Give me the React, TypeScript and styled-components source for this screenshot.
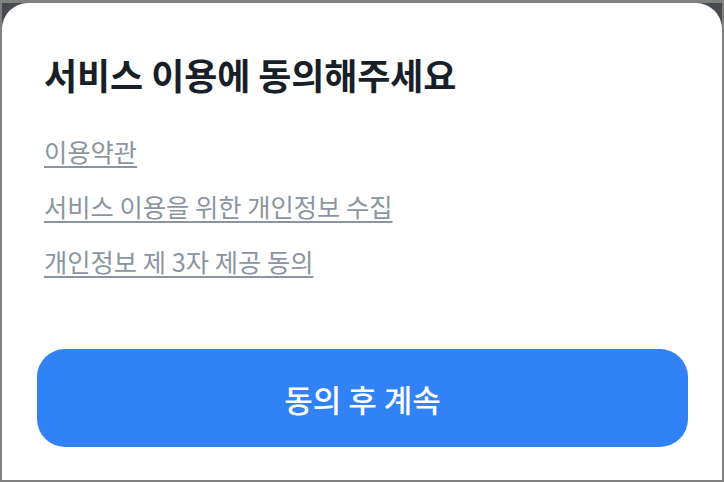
import { createGlobalStyle } from "styled-components"
import styled from "styled-components"

const GlobalStyle = createGlobalStyle`
  html, body {
    margin: 0;
    padding: 0;
    height: 100%;
  }
  body {
    font-family: "Noto Sans CJK KR", "Noto Sans", sans-serif;
    background: #808080;
  }
  #root {
    height: 100%;
  }
`

const Frame = styled.div`
  box-sizing: border-box;
  height: 482px;
  width: 724px;
  border: 2px solid #808080;
  border-top-width: 3px;
  background: #474a4f;
  display: flex;
  flex-direction: column;
`

const Sheet = styled.section`
  flex: 1;
  background: #ffffff;
  border-radius: 26px 26px 0 0;
  display: flex;
  flex-direction: column;
  padding: 47px 34px 33px 35px;
`

const Title = styled.h2`
  margin: 0 0 0 7px;
  font-size: 36px;
  line-height: 48px;
  font-weight: 700;
  color: #191f28;
  letter-spacing: -0.1px;
`

const LinkList = styled.ul`
  list-style: none;
  margin: 37px 0 0 7px;
  padding: 0;
  display: flex;
  flex-direction: column;
  gap: 23px;
`

const TermLink = styled.a`
  display: inline-block;
  font-size: 25.3px;
  line-height: 32px;
  color: #8b95a1;
  text-decoration: underline;
  text-underline-offset: 4px;
  text-decoration-thickness: 2px;
  cursor: pointer;
`

const Spacer = styled.div`
  flex: 1;
`

const PrimaryButton = styled.button`
  height: 98px;
  width: 100%;
  border: none;
  border-radius: 28px;
  background: #3182f6;
  color: #ffffff;
  font-family: inherit;
  font-size: 31px;
  font-weight: 500;
  cursor: pointer;
`

const terms = ["이용약관", "서비스 이용을 위한 개인정보 수집", "개인정보 제 3자 제공 동의"]

export default function App() {
  return (
    <>
      <GlobalStyle />
      <Frame>
        <Sheet>
          <Title>서비스 이용에 동의해주세요</Title>
          <LinkList>
            {terms.map((t) => (
              <li key={t}>
                <TermLink>{t}</TermLink>
              </li>
            ))}
          </LinkList>
          <Spacer />
          <PrimaryButton>동의 후 계속</PrimaryButton>
        </Sheet>
      </Frame>
    </>
  )
}
